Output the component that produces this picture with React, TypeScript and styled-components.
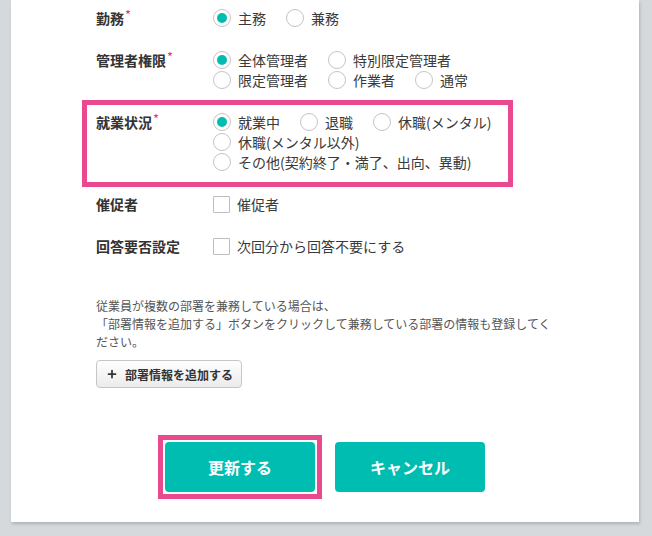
import React from 'react'
import styled, { createGlobalStyle, css } from 'styled-components'
import { Plus } from 'lucide-react'

const TEAL = '#00bdb2'
const PINK = '#e9498f'

type Option = { label: string, checked?: boolean }

const GlobalStyle = createGlobalStyle`
    html, body {
        margin: 0;
        padding: 0;
        background: #d6d9dc;
        font-family: "Noto Sans CJK JP", "Noto Sans", sans-serif;
        color: #333;
    }
`

// ラジオボタンのグループ
const RadioGroup: React.FC<{ options: Option[] }> = ({ options }) => (
    <Options>
        {options.map((o, i) => (
            <Choice key={i}>
                <Radio $checked={!!o.checked} />
                <span>{o.label}</span>
            </Choice>
        ))}
    </Options>
)

const FieldLabel: React.FC<{ text: string, required?: boolean }> = ({ text, required }) => (
    <Label>
        {text}
        {required && <Required>*</Required>}
    </Label>
)

const App: React.FC = () => {
    return (
        <Page>
            <GlobalStyle />
            <Card>
                <Fields>
                    <Row>
                        <FieldLabel text="勤務" required />
                        <RadioGroup options={[{ label: '主務', checked: true }, { label: '兼務' }]} />
                    </Row>
                    <Row>
                        <FieldLabel text="管理者権限" required />
                        <RadioGroup options={[
                            { label: '全体管理者', checked: true },
                            { label: '特別限定管理者' },
                            { label: '限定管理者' },
                            { label: '作業者' },
                            { label: '通常' },
                        ]} />
                    </Row>
                    <Row $highlighted>
                        <FieldLabel text="就業状況" required />
                        <RadioGroup options={[
                            { label: '就業中', checked: true },
                            { label: '退職' },
                            { label: '休職(メンタル)' },
                            { label: '休職(メンタル以外)' },
                            { label: 'その他(契約終了・満了、出向、異動)' },
                        ]} />
                    </Row>
                    <Row>
                        <FieldLabel text="催促者" />
                        <Options>
                            <Choice><Checkbox /><span>催促者</span></Choice>
                        </Options>
                    </Row>
                    <Row>
                        <FieldLabel text="回答要否設定" />
                        <Options>
                            <Choice><Checkbox /><span>次回分から回答不要にする</span></Choice>
                        </Options>
                    </Row>
                </Fields>

                <Note>
                    従業員が複数の部署を兼務している場合は、<br />
                    「部署情報を追加する」ボタンをクリックして兼務している部署の情報も登録してください。
                </Note>
                <AddButton type="button">
                    <Plus size={12} strokeWidth={3.5} />
                    部署情報を追加する
                </AddButton>

                <Actions>
                    <Highlight>
                        <ActionButton type="button">更新する</ActionButton>
                    </Highlight>
                    <ActionButton type="button">キャンセル</ActionButton>
                </Actions>
            </Card>
        </Page>
    )
}

export default App

const Page = styled.div`
    min-height: 100vh;
    box-sizing: border-box;
    padding: 0 13px 14px 11px;
`

const Card = styled.div`
    background: #fff;
    box-shadow: 1px 2px 3px rgba(0, 0, 0, 0.18);
    padding: 8px 0 30px 85px;
`

const Fields = styled.div`
    display: flex;
    flex-direction: column;
    gap: 22px;
`

const Row = styled.div<{ $highlighted?: boolean }>`
    display: flex;
    align-items: flex-start;
    line-height: 20px;

    ${p => p.$highlighted && css`
        width: 431px;
        box-sizing: border-box;
        margin: -12px 0 -15px -14px;
        padding: 7px 9px 10px;
        border: 5px solid ${PINK};
    `}
`

const Label = styled.div`
    flex: 0 0 117px;
    font-size: 14px;
    font-weight: 700;
    color: #333;
`

const Required = styled.span`
    color: #e8385e;
    font-size: 13px;
    font-weight: 400;
    vertical-align: top;
    line-height: 14px;
    margin-left: 1px;
`

const Options = styled.div`
    flex: 1;
    max-width: 290px;
    display: flex;
    flex-wrap: wrap;
    column-gap: 20px;
    font-size: 14px;
    color: #3a3a3a;
`

const Choice = styled.label`
    display: flex;
    align-items: center;
    gap: 7px;
    height: 20px;
    white-space: nowrap;
`

const Radio = styled.span<{ $checked: boolean }>`
    width: 18px;
    height: 18px;
    box-sizing: border-box;
    border: 1px solid #c4c4c4;
    border-radius: 50%;
    background: #fff;
    display: flex;
    align-items: center;
    justify-content: center;

    &::after {
        content: '';
        width: 10px;
        height: 10px;
        border-radius: 50%;
        background: ${p => (p.$checked ? TEAL : 'transparent')};
    }
`

const Checkbox = styled.span`
    width: 17px;
    height: 17px;
    box-sizing: border-box;
    border: 1px solid #bdbdbd;
    border-radius: 1px;
    background: #fff;
`

const Note = styled.p`
    width: 460px;
    margin: 41px 0 0;
    font-size: 12px;
    line-height: 18px;
    color: #555;
`

const AddButton = styled.button`
    display: flex;
    align-items: center;
    gap: 7px;
    height: 28px;
    margin-top: 9px;
    padding: 0 8px 0 9px;
    border: 1px solid #c6c6c6;
    border-radius: 4px;
    background: linear-gradient(#ffffff, #ebebeb);
    font-family: inherit;
    font-size: 12px;
    font-weight: 700;
    color: #333;
`

const Actions = styled.div`
    display: flex;
    justify-content: center;
    gap: 20px;
    margin: 54px 0 0 -85px;
`

// 強調枠（レイアウトに影響しないよう負のマージン）
const Highlight = styled.div`
    display: flex;
    margin: -7px;
    padding: 2px;
    border: 5px solid ${PINK};
    background: #fff;
`

const ActionButton = styled.button`
    width: 150px;
    height: 50px;
    border: none;
    border-radius: 4px;
    background: ${TEAL};
    color: #fff;
    font-family: inherit;
    font-size: 16px;
    font-weight: 700;
`
